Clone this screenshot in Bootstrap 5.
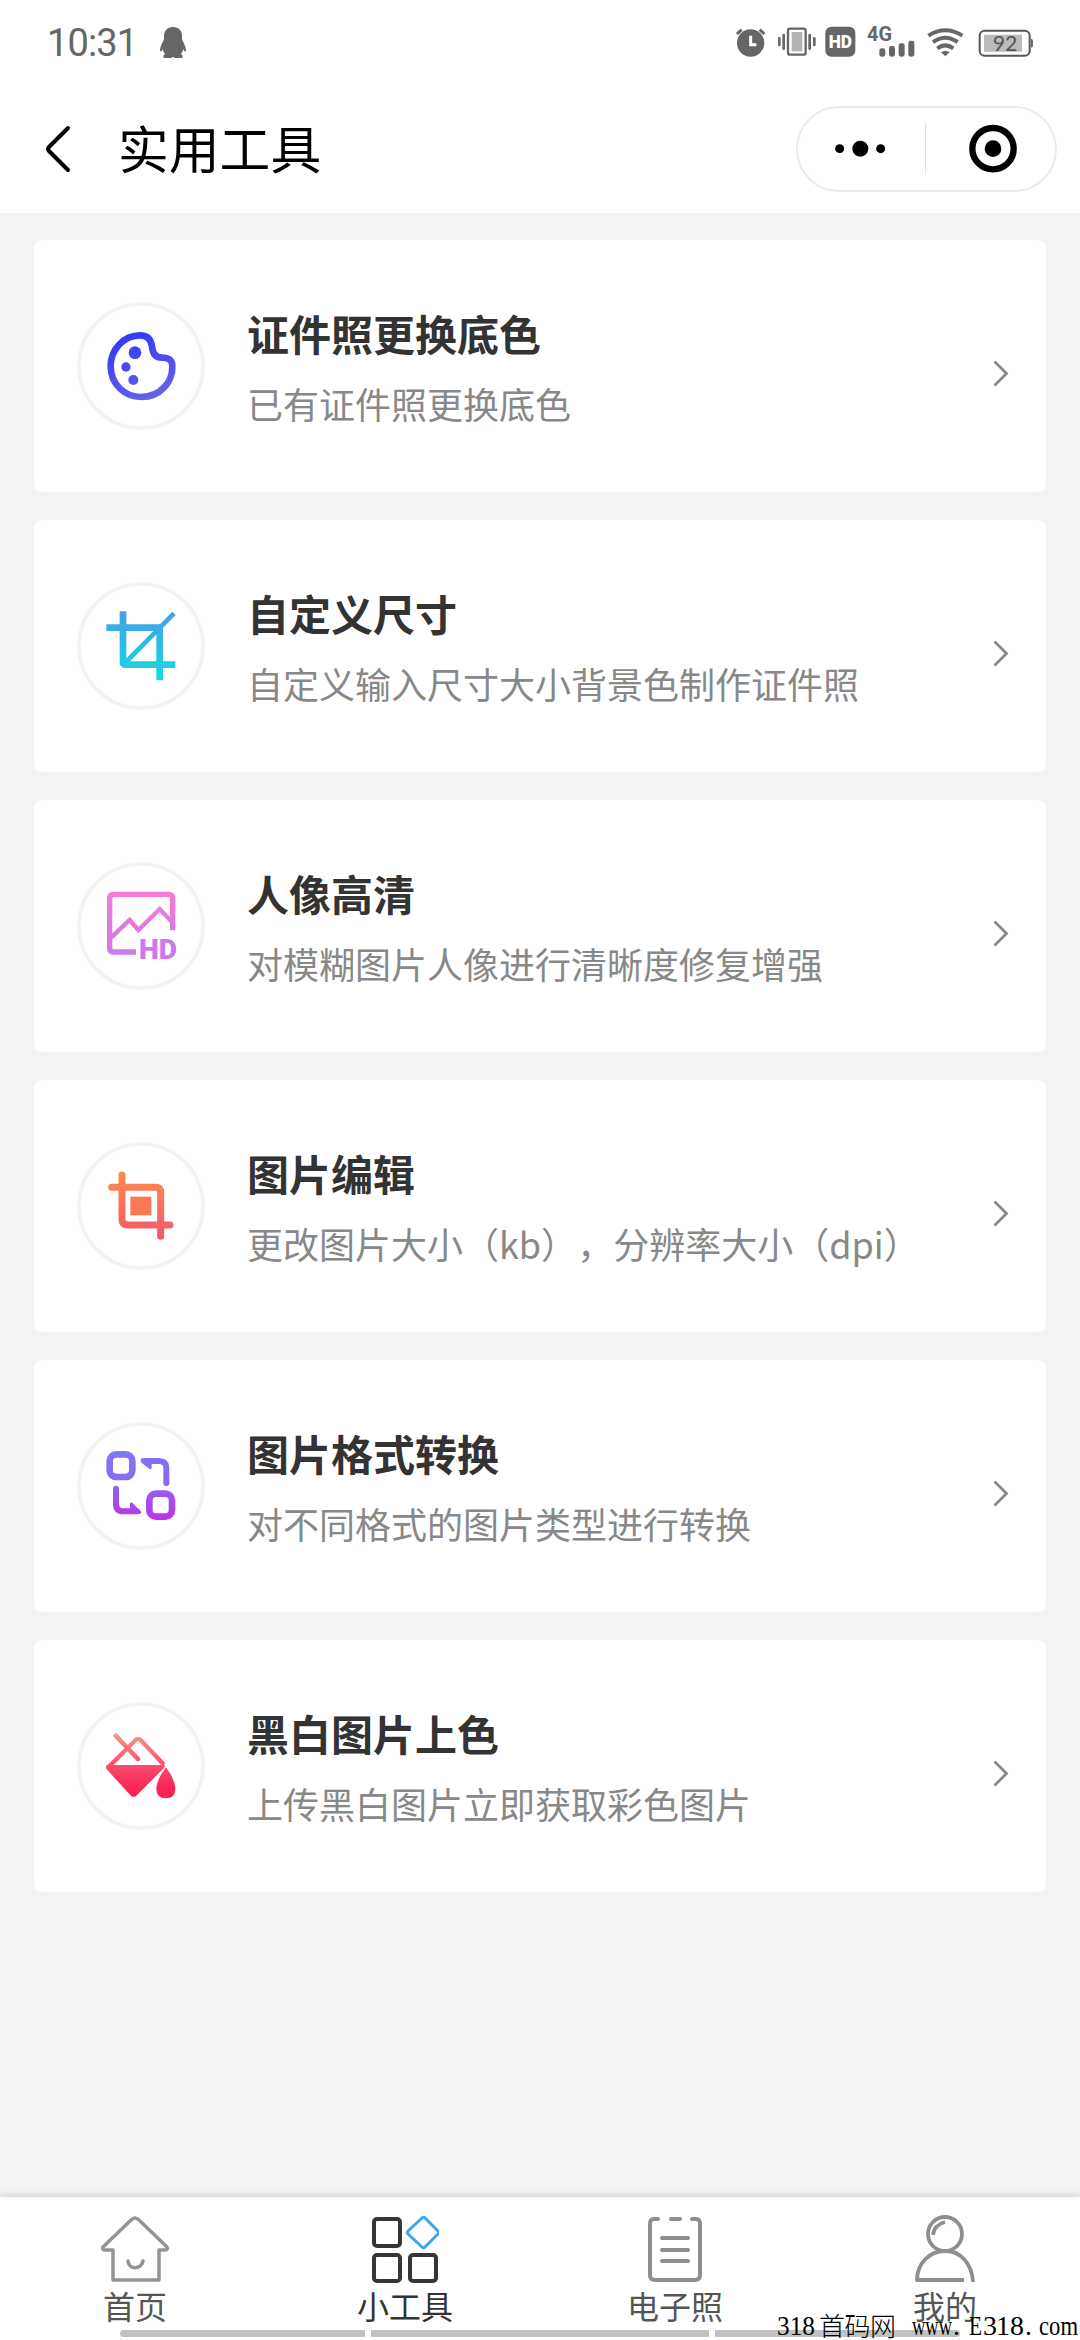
<!DOCTYPE html>
<html lang="zh-CN">
<head>
<meta charset="utf-8">
<meta name="viewport" content="width=device-width, initial-scale=1">
<title>实用工具</title>
<link href="https://cdn.jsdelivr.net/npm/bootstrap@5.3.0/dist/css/bootstrap.min.css" rel="stylesheet">
<style>
html,body{height:100%}
body{background:#f2f3f5;font-family:"Noto Sans CJK SC",sans-serif;color:#333;overflow:hidden}
svg{display:block;flex:none}
.app-top{height:213px;background:#fff}
.status-row{height:84px;padding:0 46px 0 47px;color:#666}
.clock{font:400 38px/44px Roboto,sans-serif;letter-spacing:-.9px;width:113px;padding-top:2px;white-space:nowrap}
.title-row{height:130px;padding:0 23px 0 45px}
.page-title{font-size:50.8px;line-height:60px;color:#000;margin-left:47px;padding-bottom:5px}
.capsule{width:261px;height:86px;border:2px solid #ebebeb;border-radius:43px}
.tool-list{padding:27px 34px 0;gap:28px}
.tool{height:252px;border:0;border-radius:8px;padding:0 37px 0 43px;background:#fff}
.tool-name{font-size:42px;line-height:56px;font-weight:700;color:#333;margin-bottom:18px}
.tool-desc{font-size:36px;line-height:48px;color:#888;font-kerning:none}
.tool-text{margin-left:42px;white-space:nowrap}
.arrow{margin-top:15px}
.tabs{height:144px;background:#fff;border-top:1px solid #dcdedc;box-shadow:0 -2px 5px rgba(0,0,0,.1)}
.tab-link{color:#555;font-size:32px;line-height:40px;padding-top:17px}
.tab-link.active{color:#333}
.tab-link svg{margin-bottom:1px}
.home-strip{left:120px;bottom:3px;width:840px;height:7px;gap:6px}
.home-strip div{height:7px;background:#c1c1c1}
.site-stamp{right:0;bottom:0}
</style>
<script src="https://cdn.jsdelivr.net/npm/bootstrap@5.3.0/dist/js/bootstrap.bundle.min.js"></script>
</head>
<body class="d-flex flex-column">
<header class="app-top flex-shrink-0">
  <div class="status-row d-flex align-items-center">
    <span class="clock">10:31</span>
    <svg width="26" height="31" viewBox="0 0 26 31" fill="#666"><path d="M13 0C7 0 4 4 4 9v3C3 15 0 19 0 24c1 1 2 0 3-2 0 2 1 4 2 5-2 1-2 3-1 4h7l2-1 2 1h7c1-1 1-3-1-4 1-1 2-3 2-5 1 2 2 3 3 2 0-5-3-9-4-12V9c0-5-3-9-9-9z"/></svg>
    <div class="d-flex ms-auto">
      <svg width="41.67" height="36" viewBox="100 73 125 108"><circle cx="150" cy="130" r="41" fill="#666"/><path d="M150 108v27h17" fill="none" stroke="#fff" stroke-width="9"/><path d="M109 103l14-13M191 103l-14-13" stroke="#666" stroke-width="9"/></svg>
      <svg width="46.67" height="36" viewBox="225 73 140 108" fill="none" stroke="#666"><rect x="261" y="87" width="53" height="78" rx="6" stroke-width="7"/><path d="M272 97h32v58h-32z" fill="#b3b3b3" stroke="none"/><path d="M235 116v20M248 106v41M326 106v41M340 116v20" stroke-width="8" stroke-linecap="round"/></svg>
      <svg width="40" height="36" viewBox="365 73 120 108"><rect x="375" y="81" width="90" height="90" rx="18" fill="#666"/><text x="420" y="146" text-anchor="middle" font-family="Roboto,sans-serif" font-weight="900" font-size="56" textLength="70" lengthAdjust="spacingAndGlyphs" fill="#fff">HD</text></svg>
      <svg width="60" height="36" viewBox="485 73 180 108" fill="#666"><text x="500" y="124" font-family="Roboto,sans-serif" font-weight="700" font-size="59" textLength="75" lengthAdjust="spacingAndGlyphs">4G</text><rect x="537" y="146" width="18" height="25" rx="7"/><rect x="566" y="139" width="18" height="32" rx="7"/><rect x="595" y="131" width="18" height="40" rx="7"/><rect x="624" y="123" width="18" height="48" rx="7"/></svg>
      <svg width="48.33" height="36" viewBox="665 73 145 108" fill="none" stroke="#666" stroke-width="12"><path d="M684 108Q735 76 786 108M698 127Q735 101 772 127M711 146Q735 128 759 146"/><path d="M722 158q13-10 26 0l-13 12z" fill="#666" stroke="none"/></svg>
      <svg width="63.33" height="36" viewBox="810 73 190 108"><rect x="836" y="93" width="150" height="75" rx="15" fill="#fff" stroke="#555" stroke-width="6"/><path d="M849 105h114v51H849z" fill="#bbb"/><path d="M990 117q6 1 6 6v15q0 5-6 6z" fill="#666"/><text x="875" y="155" font-family="Lato,sans-serif" font-size="64" textLength="74" lengthAdjust="spacingAndGlyphs" fill="#555">92</text></svg>
    </div>
  </div>
  <div class="title-row d-flex align-items-center">
    <svg width="26" height="48" viewBox="0 0 26 48" fill="none" stroke="#000" stroke-width="4" stroke-linecap="round" stroke-linejoin="round"><path d="M23 3L4 22q-2 2 0 4l19 19"/></svg>
    <h1 class="page-title fw-normal mb-0">实用工具</h1>
    <div class="capsule ms-auto"><svg width="257" height="82" viewBox="293 325 771 246"><circle cx="418" cy="447" r="13.5"/><circle cx="480" cy="447" r="24"/><circle cx="541" cy="447" r="13.5"/><path d="M676 370v155" stroke="#ddd" stroke-width="3"/><circle cx="878" cy="447" r="62" fill="none" stroke="#000" stroke-width="19"/><circle cx="878" cy="447" r="25"/></svg></div>
  </div>
</header>

<main class="tool-list d-flex flex-column flex-grow-1">
  <a class="tool card flex-row align-items-center text-decoration-none">
    <svg width="128" height="128" viewBox="50 68 384 384" fill="none"><defs><linearGradient id="g1" gradientUnits="userSpaceOnUse" x1="190" y1="160" x2="270" y2="360"><stop stop-color="#3038f5"/><stop offset="1" stop-color="#6562e8"/></linearGradient></defs><circle cx="242" cy="260" r="186" stroke="#f3f3f4" stroke-width="11"/><path d="M240 168C188 168 151 212 151 260C151 314 192 353 243 353C299 353 337 309 336 261C336 239 321 235 304 235C286 235 277 222 275 202C272 179 260 168 240 168Z" stroke="url(#g1)" stroke-width="20"/><g fill="url(#g1)"><circle cx="224" cy="220" r="19"/><circle cx="197" cy="263" r="14"/><circle cx="219" cy="302" r="15"/></g></svg>
    <div class="tool-text"><h2 class="tool-name">证件照更换底色</h2><p class="tool-desc mb-0">已有证件照更换底色</p></div>
    <svg class="arrow ms-auto" width="16" height="27" viewBox="0 0 16 27" fill="none" stroke="#888" stroke-width="2.8"><path d="M1.5 1.5l12 12-12 12"/></svg>
  </a>
  <a class="tool card flex-row align-items-center text-decoration-none">
    <svg width="128" height="128" viewBox="50 68 384 384" fill="none"><defs><linearGradient id="g2" gradientUnits="userSpaceOnUse" x1="0" y1="160" x2="0" y2="360"><stop stop-color="#45a0e8"/><stop offset="1" stop-color="#14dbe0"/></linearGradient></defs><circle cx="242" cy="260" r="186" stroke="#f3f3f4" stroke-width="11"/><g stroke="url(#g2)" stroke-width="20"><path d="M188 156V308Q188 316 196 316H345M138 205H298V363"/><path d="M194 311L341 162" stroke-width="14"/></g></svg>
    <div class="tool-text"><h2 class="tool-name">自定义尺寸</h2><p class="tool-desc mb-0">自定义输入尺寸大小背景色制作证件照</p></div>
    <svg class="arrow ms-auto" width="16" height="27" viewBox="0 0 16 27" fill="none" stroke="#888" stroke-width="2.8"><path d="M1.5 1.5l12 12-12 12"/></svg>
  </a>
  <a class="tool card flex-row align-items-center text-decoration-none">
    <svg width="128" height="128" viewBox="50 68 384 384" fill="none"><defs><linearGradient id="g3" gradientUnits="userSpaceOnUse" x1="0" y1="160" x2="0" y2="360"><stop stop-color="#f77bd2"/><stop offset="1" stop-color="#c979ed"/></linearGradient></defs><circle cx="242" cy="260" r="186" stroke="#f3f3f4" stroke-width="11"/><g stroke="url(#g3)" stroke-width="16"><path d="M227 338H160Q148 338 148 326V177Q148 165 160 165H325Q337 165 337 177V273"/><path d="M150 297L208 242L234 272L298 209L337 250" stroke-width="13"/></g><text x="236" y="360" font-family="Roboto,sans-serif" font-weight="900" font-size="84" textLength="114" lengthAdjust="spacingAndGlyphs" fill="#cb79eb">HD</text></svg>
    <div class="tool-text"><h2 class="tool-name">人像高清</h2><p class="tool-desc mb-0">对模糊图片人像进行清晰度修复增强</p></div>
    <svg class="arrow ms-auto" width="16" height="27" viewBox="0 0 16 27" fill="none" stroke="#888" stroke-width="2.8"><path d="M1.5 1.5l12 12-12 12"/></svg>
  </a>
  <a class="tool card flex-row align-items-center text-decoration-none">
    <svg width="128" height="128" viewBox="50 68 384 384" fill="none"><defs><linearGradient id="g4" gradientUnits="userSpaceOnUse" x1="0" y1="160" x2="0" y2="360"><stop stop-color="#ff8a4e"/><stop offset="1" stop-color="#ef586e"/></linearGradient></defs><circle cx="242" cy="260" r="186" stroke="#f3f3f4" stroke-width="11"/><path d="M185 167V299Q185 317 203 317H329M154 204H286Q301 204 301 219V351" stroke="url(#g4)" stroke-width="21" stroke-linecap="round"/><path d="M210 232h63v56h-63z" fill="#fc7855"/></svg>
    <div class="tool-text"><h2 class="tool-name">图片编辑</h2><p class="tool-desc d-flex mb-0"><span>更改图片大小（kb）</span><span>，</span><span>分辨率大小（dpi）</span></p></div>
    <svg class="arrow ms-auto" width="16" height="27" viewBox="0 0 16 27" fill="none" stroke="#888" stroke-width="2.8"><path d="M1.5 1.5l12 12-12 12"/></svg>
  </a>
  <a class="tool card flex-row align-items-center text-decoration-none">
    <svg width="128" height="128" viewBox="50 68 384 384" fill="none"><defs><linearGradient id="g5" gradientUnits="userSpaceOnUse" x1="0" y1="160" x2="0" y2="360"><stop stop-color="#7d78f5"/><stop offset=".5" stop-color="#9065f0"/><stop offset="1" stop-color="#bd32ea"/></linearGradient></defs><circle cx="242" cy="260" r="186" stroke="#f3f3f4" stroke-width="11"/><g stroke="url(#g5)" stroke-width="20" stroke-linejoin="round"><rect x="148" y="165" width="68" height="68" rx="20"/><rect x="267" y="283" width="68" height="69" rx="20"/><g stroke-width="18" stroke-linecap="round"><path d="M256 185H296Q318 185 318 207V251M167 268V313Q167 336 190 336H230"/></g></g><g fill="url(#g5)" stroke="url(#g5)" stroke-width="8" stroke-linejoin="round"><path d="M245 181H270V206L246 187ZM213 313V339H239Z"/></g></svg>
    <div class="tool-text"><h2 class="tool-name">图片格式转换</h2><p class="tool-desc mb-0">对不同格式的图片类型进行转换</p></div>
    <svg class="arrow ms-auto" width="16" height="27" viewBox="0 0 16 27" fill="none" stroke="#888" stroke-width="2.8"><path d="M1.5 1.5l12 12-12 12"/></svg>
  </a>
  <a class="tool card flex-row align-items-center text-decoration-none">
    <svg width="128" height="128" viewBox="50 68 384 384" fill="none"><defs><linearGradient id="g6" gradientUnits="userSpaceOnUse" x1="0" y1="165" x2="0" y2="330"><stop stop-color="#f49b83"/><stop offset=".55" stop-color="#f94f70"/><stop offset="1" stop-color="#f92355"/></linearGradient></defs><circle cx="242" cy="260" r="186" stroke="#f3f3f4" stroke-width="11"/><g stroke="url(#g6)" stroke-width="13" stroke-linejoin="round" stroke-linecap="round"><path d="M144 264L221 187Q231 172 243 184L307 252"/><path d="M166 169L233 239" stroke-width="14"/></g><path d="M140 257H312Q315 262 311 266L228 349Q220 356 212 349L139 270Q134 263 140 257ZM317 264Q345 302 345 329Q345 357 317 357Q288 357 288 329Q288 302 317 264Z" fill="url(#g6)"/></svg>
    <div class="tool-text"><h2 class="tool-name">黑白图片上色</h2><p class="tool-desc mb-0">上传黑白图片立即获取彩色图片</p></div>
    <svg class="arrow ms-auto" width="16" height="27" viewBox="0 0 16 27" fill="none" stroke="#888" stroke-width="2.8"><path d="M1.5 1.5l12 12-12 12"/></svg>
  </a>
</main>

<nav class="tabs d-flex position-relative flex-shrink-0">
  <a class="tab-link d-flex flex-column align-items-center text-decoration-none w-25">
    <svg width="68" height="70" viewBox="0 0 68 70" fill="none" stroke="#949494" stroke-width="3.5" stroke-linejoin="round" stroke-linecap="round"><path d="M30 6q4-4 8 0l28 27q1 3-2 3h-6v30H12V36H4q-3 0-2-3zM27 47c1 9 13 9 15 0"/></svg>
    <span>首页</span></a>
  <a class="tab-link active d-flex flex-column align-items-center text-decoration-none w-25">
    <svg width="68" height="70" viewBox="0 0 68 70" fill="none" stroke="#363636" stroke-width="4"><rect x="3" y="5" width="26" height="27" rx="3"/><rect x="3" y="41" width="26" height="26" rx="3"/><rect x="39" y="41" width="26" height="26" rx="3"/><path d="M51 4q1.500-1.500 3 0l13 13q1.500 1.500 0 3L54 33q-1.500 1.500-3 0L37 20q-1.500-1.500 0-3z" stroke="#3ca6ea" stroke-width="3"/></svg>
    <span>小工具</span></a>
  <a class="tab-link d-flex flex-column align-items-center text-decoration-none w-25">
    <svg width="56" height="70" viewBox="0 0 56 70" fill="none" stroke="#8e8e8e" stroke-width="4" stroke-linecap="round"><path d="M11 5H7Q3 5 3 10V61Q3 66 8 66H48Q53 66 53 61V10Q53 5 49 5H45M24 5h9M15 24H41M15 36H41M15 47H41"/></svg>
    <span>电子照</span></a>
  <a class="tab-link d-flex flex-column align-items-center text-decoration-none w-25">
    <svg width="60" height="70" viewBox="0 0 60 70" fill="none" stroke="#8e8e8e" stroke-width="3.8"><circle cx="30" cy="20" r="17"/><path d="M49 66H2C2 50 14 37 30 37S57 50 58 68M18 21q1-10 12-13" stroke-linejoin="round"/></svg>
    <span>我的</span></a>
  <div class="home-strip position-absolute d-flex"><div class="rounded-start-pill" style="width:245px"></div><div style="width:338px"></div><div class="rounded-end-pill" style="width:245px"></div></div>
  <svg class="site-stamp position-absolute" width="304" height="36" viewBox="776 2304 304 36" font-family="'Liberation Serif',serif" font-size="28" fill="#000"><text x="777" y="2335" textLength="38" lengthAdjust="spacingAndGlyphs">318</text><text x="819" y="2336" font-family="'Noto Sans CJK SC',sans-serif" font-weight="300" font-size="26" textLength="77">首码网</text><text x="912" y="2335" textLength="40" lengthAdjust="spacingAndGlyphs">www</text><text x="953" y="2335">.</text><text x="969" y="2335" textLength="13" lengthAdjust="spacingAndGlyphs">E</text><text y="2335" x="983 996 1010 1025">318.</text><text x="1039" y="2335" textLength="39" lengthAdjust="spacingAndGlyphs">com</text></svg>
</nav>
</body>
</html>
